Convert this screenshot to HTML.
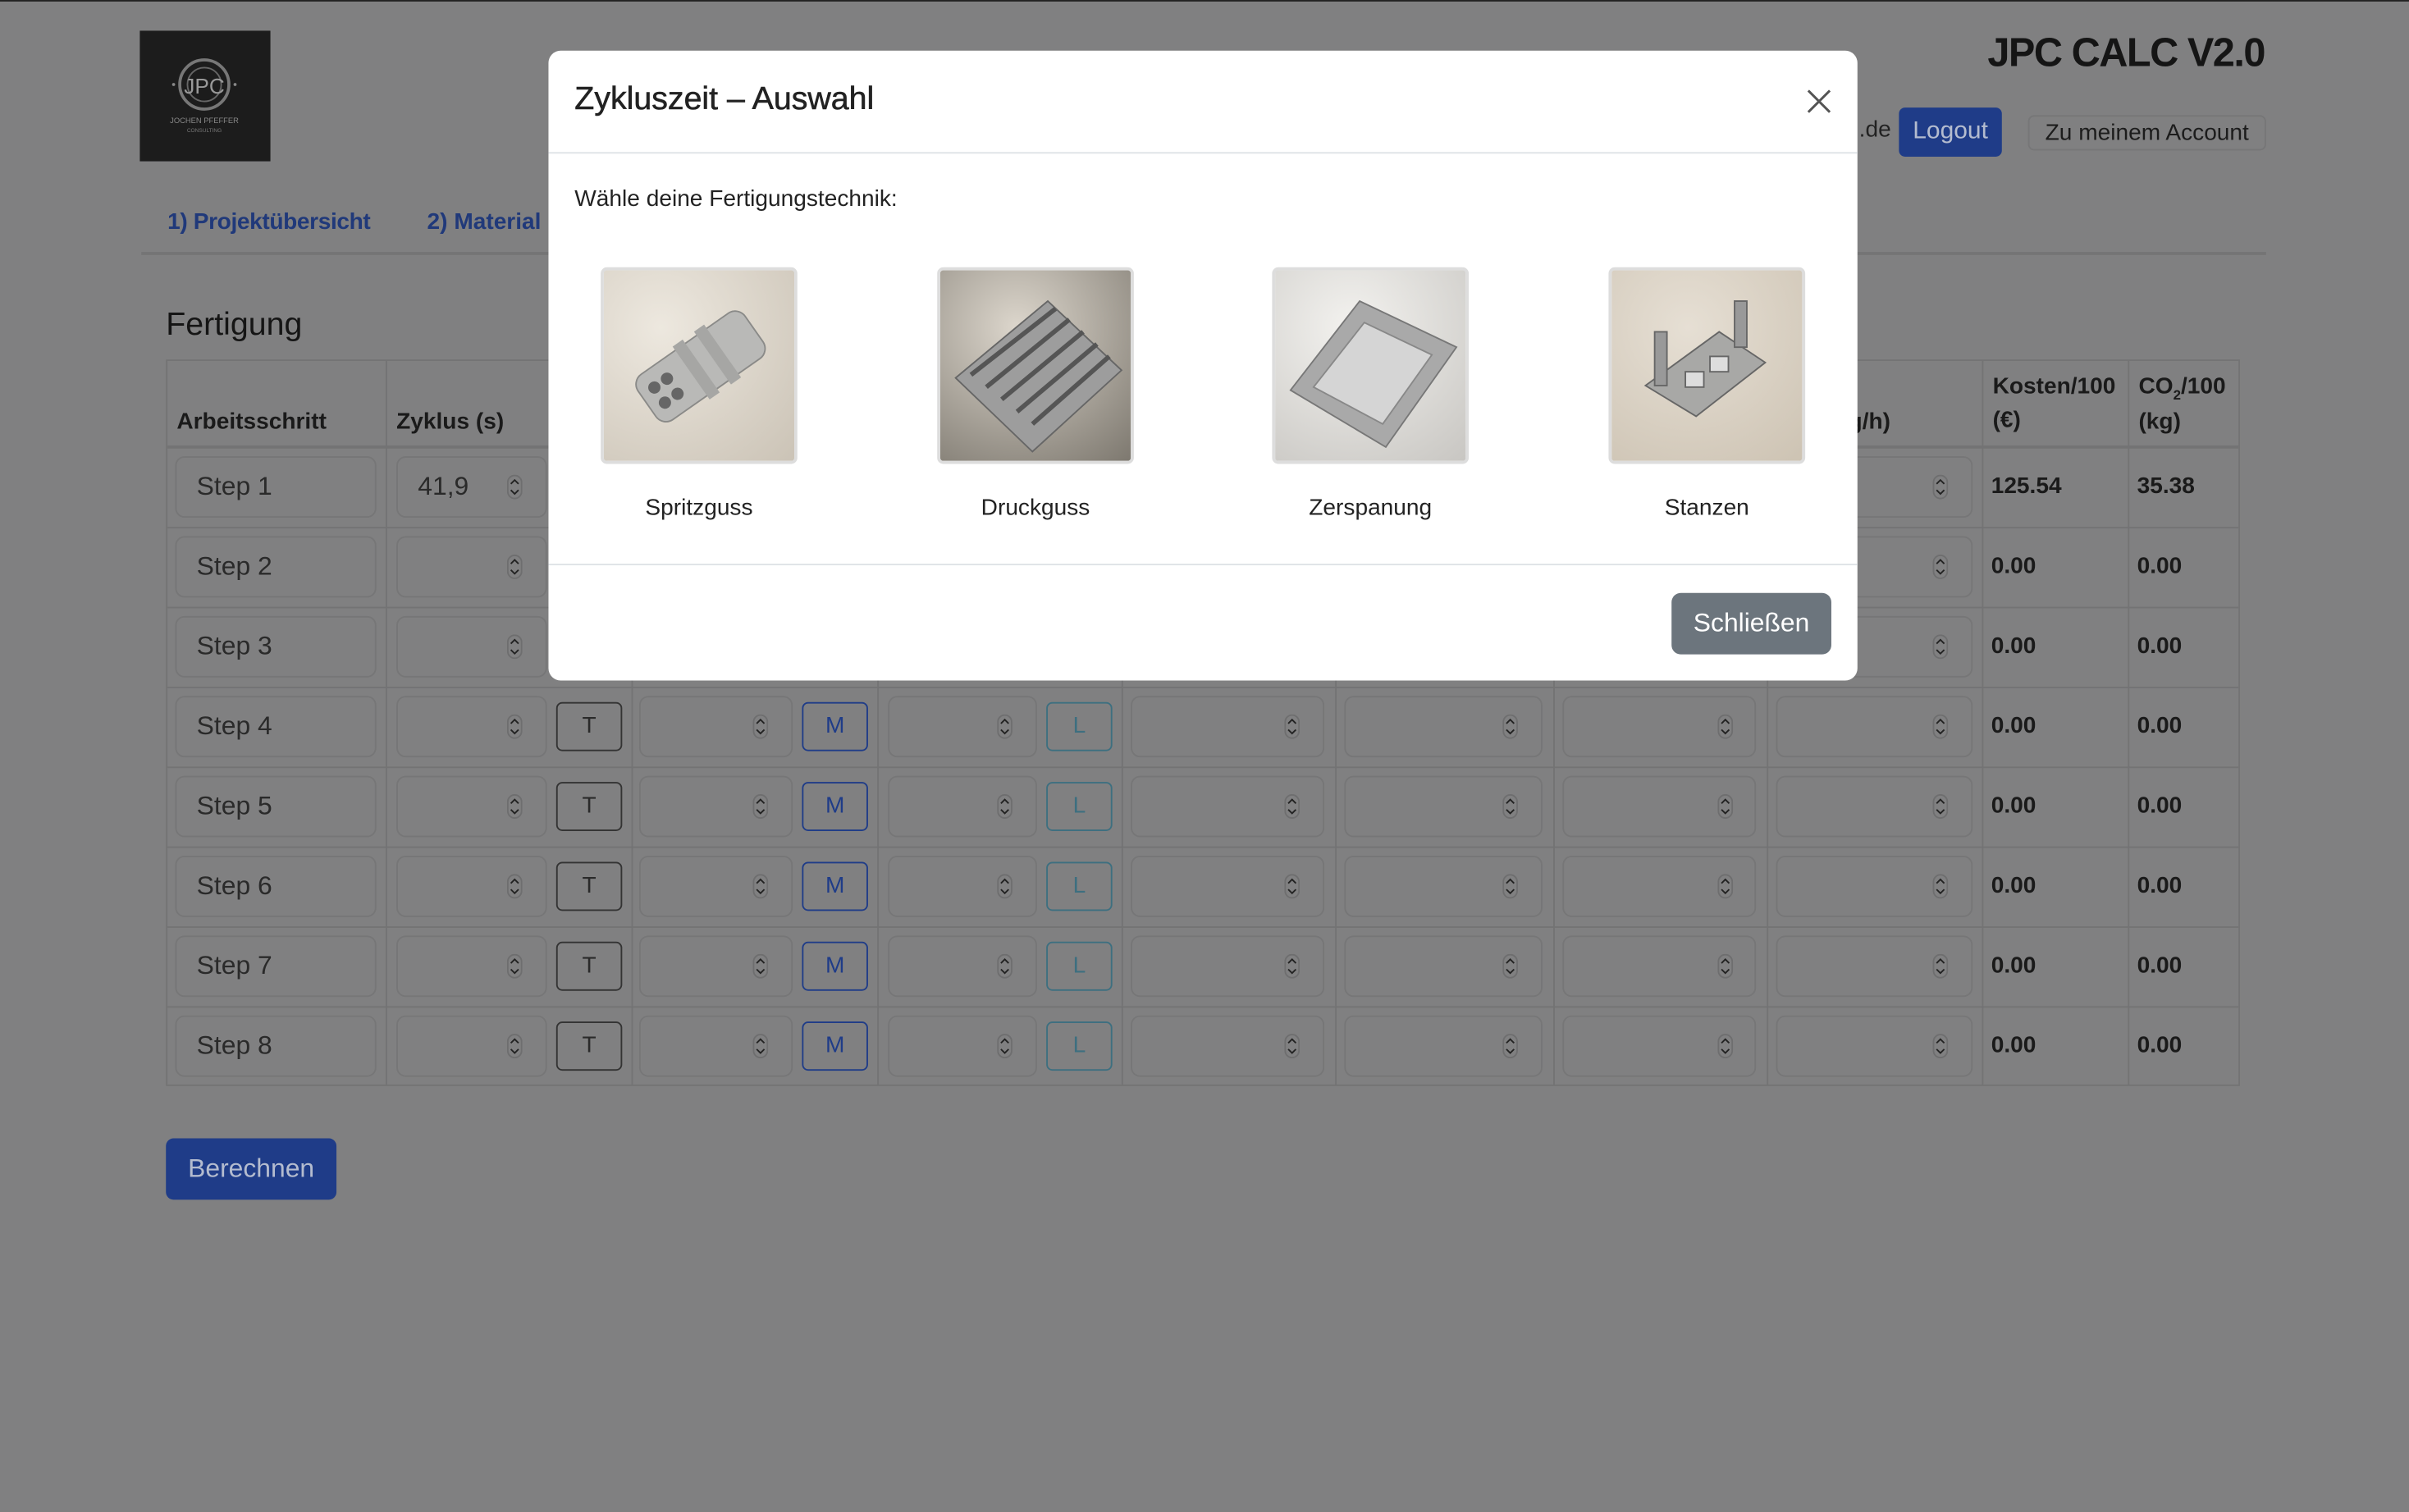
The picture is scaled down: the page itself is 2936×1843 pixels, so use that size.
<!DOCTYPE html>
<html><head><meta charset="utf-8"><style>
*{box-sizing:border-box;margin:0;padding:0}
html,body{width:2936px;height:1842px;overflow:hidden;background:#808081}
#w{position:absolute;left:0;top:0;width:1568px;height:984px;transform:scale(1.87245);transform-origin:0 0;font-family:"Liberation Sans",sans-serif;color:#1a1a1a;background:#808081;border-top:1px solid #222}
.a{position:absolute}
.tb{position:absolute;left:108px;top:233px;width:1350px;height:473px;border:1px solid #737374}
.vl{position:absolute;top:0;bottom:0;width:1px;background:#737374}
.hl{position:absolute;left:0;right:0;height:1px;background:#737374}
.row{position:absolute;left:108px;width:1350px;height:52px}
.in{position:absolute;top:7px;height:40px;border:1px solid #767677;border-radius:6px}
.in span{position:absolute;left:13px;top:9px;font-size:17px;color:#2a2a2a}
.sp{position:absolute;top:19px;width:10px;height:16px}
.bt{position:absolute;top:11px;width:43px;height:32px;border:1.3px solid #333;border-radius:4px;text-align:center;line-height:30px;font-size:15px;color:#2a2a2a}
.num{position:absolute;top:18px;font-size:15px;font-weight:bold;color:#1a1a1a}
.th{position:absolute;font-size:15px;font-weight:bold;line-height:22px}
</style></head><body><div id="w">
<div class="a" style="left:91px;top:19px;width:85px;height:85px;background:#1c1c1c">
<svg width="85" height="85"><circle cx="42" cy="35" r="16" fill="none" stroke="#777" stroke-width="2"/><circle cx="42" cy="35" r="11" fill="none" stroke="#666" stroke-width="1"/><text x="42" y="41" font-size="14" fill="#999" text-anchor="middle" font-family="Liberation Sans">JPC</text><circle cx="22" cy="35" r="1" fill="#888"/><circle cx="62" cy="35" r="1" fill="#888"/><text x="42" y="60" font-size="5" fill="#888" text-anchor="middle" font-family="Liberation Sans">JOCHEN PFEFFER</text><text x="42" y="66" font-size="3.5" fill="#777" text-anchor="middle" font-family="Liberation Sans">CONSULTING</text></svg></div>
<div class="a" style="right:94px;top:18px;font-size:26px;font-weight:bold;color:#151515;letter-spacing:-0.8px">JPC CALC V2.0</div>
<div class="a" style="left:1210px;top:75px;font-size:15px;color:#222">.de</div>
<div class="a" style="left:1236px;top:69px;width:67px;height:32px;background:#1f3c88;border-radius:4px;color:#b4bccf;font-size:16px;text-align:center;line-height:32px">Logout</div>
<div class="a" style="left:1320px;top:74px;width:155px;height:23px;border:1px solid #767677;border-radius:4px;font-size:15px;text-align:center;line-height:21px;color:#1c1c1c">Zu meinem Account</div>
<div class="a" style="left:109px;top:135px;font-size:15px;font-weight:bold;color:#20397a;letter-spacing:-0.2px">1) Projektübersicht</div>
<div class="a" style="left:278px;top:135px;font-size:15px;font-weight:bold;color:#20397a">2) Material</div>
<div class="a" style="left:92px;top:163px;width:1383px;height:2px;background:#747475"></div>
<div class="a" style="left:108px;top:199px;font-size:21px;color:#151515">Fertigung</div>
<div class="tb">
<div class="vl" style="left:142px"></div><div class="vl" style="left:302px"></div><div class="vl" style="left:462px"></div><div class="vl" style="left:621px"></div><div class="vl" style="left:760px"></div><div class="vl" style="left:902px"></div><div class="vl" style="left:1041px"></div><div class="vl" style="left:1181px"></div><div class="vl" style="left:1276px"></div>
<div class="hl" style="top:55px;height:2px"></div><div class="hl" style="top:108px"></div><div class="hl" style="top:160px"></div><div class="hl" style="top:212px"></div><div class="hl" style="top:264px"></div><div class="hl" style="top:316px"></div><div class="hl" style="top:368px"></div><div class="hl" style="top:420px"></div>
<div class="th" style="left:6px;top:29px">Arbeitsschritt</div>
<div class="th" style="left:149px;top:29px">Zyklus (s)</div>
<div class="th" style="left:1094px;top:29px">g/h)</div>
<div class="th" style="left:1188px;top:6px">Kosten/100<br>(€)</div>
<div class="th" style="left:1283px;top:6px">CO<span style="font-size:9px;position:relative;top:4px">2</span>/100<br>(kg)</div>
</div>
<svg width="0" height="0" style="position:absolute"><defs><g id="s"><rect x="0.5" y="0.5" width="9" height="15" rx="4.5" fill="none" stroke="#6e6e6f"/><path d="M2.5 6 L5 3.5 L7.5 6 M2.5 10 L5 12.5 L7.5 10" fill="none" stroke="#222" stroke-width="1"/></g></defs></svg>
<div id="rows"></div>
<div class="a" style="left:108px;top:740px;width:111px;height:40px;background:#1f3c88;border-radius:5px;color:#b4bccf;font-size:17px;text-align:center;line-height:40px">Berechnen</div>
<div class="a" style="left:357px;top:32px;width:852px;height:410px;background:#fff;border-radius:8px">
<div class="a" style="left:17px;top:20px;font-size:21px;color:#222;-webkit-text-stroke:0.3px #222">Zykluszeit – Auswahl</div>
<svg class="a" style="left:818px;top:24px" width="18" height="18"><path d="M2 2L16 16M16 2L2 16" stroke="#555" stroke-width="1.6"/></svg>
<div class="a" style="left:0;top:66px;width:852px;height:1px;background:#dee2e6"></div>
<div class="a" style="left:17px;top:88px;font-size:15px;color:#222">Wähle deine Fertigungstechnik:</div>
<div class="a" style="left:0;top:334px;width:852px;height:1px;background:#dee2e6"></div>
<div class="a" style="left:731px;top:353px;width:104px;height:40px;background:#6c757d;border-radius:6px;color:#fff;font-size:17px;text-align:center;line-height:40px">Schließen</div>
<div class="a" style="left:34px;top:141px;width:128px;height:128px;border:2px solid #ddd;border-radius:4px;background:radial-gradient(circle at 30% 30%,#ede8df,#cbc3b6)">
<svg width="124" height="124"><g transform="rotate(-35 62 62)"><rect x="20" y="45" width="85" height="36" rx="8" fill="#b9b9b7" stroke="#8a8a88"/><rect x="55" y="42" width="8" height="42" fill="#a6a6a4"/><rect x="72" y="42" width="8" height="42" fill="#a6a6a4"/><circle cx="30" cy="57" r="4" fill="#666"/><circle cx="30" cy="69" r="4" fill="#666"/><circle cx="40" cy="57" r="4" fill="#666"/><circle cx="40" cy="69" r="4" fill="#666"/></g></svg></div>
<div class="a" style="left:253px;top:141px;width:128px;height:128px;border:2px solid #ddd;border-radius:4px;background:radial-gradient(circle at 40% 30%,#dcd6cc,#7d786f)">
<svg width="124" height="124"><polygon points="10,70 70,20 118,65 60,118" fill="#9d9d9d" stroke="#666"/><g stroke="#555" stroke-width="3"><path d="M20 68L75 25M30 76L84 32M40 84L93 40M50 92L102 48M60 100L110 56"/></g></svg></div>
<div class="a" style="left:471px;top:141px;width:128px;height:128px;border:2px solid #ddd;border-radius:4px;background:radial-gradient(circle at 40% 30%,#f3f2ef,#c8c6c2)">
<svg width="124" height="124"><polygon points="10,78 55,20 118,50 72,115" fill="#a9a9a9" stroke="#777"/><polygon points="25,76 58,34 102,55 70,100" fill="#d5d5d5" stroke="#888"/></svg></div>
<div class="a" style="left:690px;top:141px;width:128px;height:128px;border:2px solid #ddd;border-radius:4px;background:radial-gradient(circle at 40% 30%,#e6dfd4,#cdc3b3)">
<svg width="124" height="124"><polygon points="22,75 70,40 100,60 55,95" fill="#a8a8a6" stroke="#666"/><rect x="28" y="40" width="8" height="35" fill="#999" stroke="#666"/><rect x="80" y="20" width="8" height="30" fill="#999" stroke="#666"/><rect x="48" y="66" width="12" height="10" fill="#ddd" stroke="#666"/><rect x="64" y="56" width="12" height="10" fill="#ddd" stroke="#666"/></svg></div>
<div class="a" style="left:34px;top:289px;width:128px;text-align:center;font-size:15px;color:#222">Spritzguss</div>
<div class="a" style="left:253px;top:289px;width:128px;text-align:center;font-size:15px;color:#222">Druckguss</div>
<div class="a" style="left:471px;top:289px;width:128px;text-align:center;font-size:15px;color:#222">Zerspanung</div>
<div class="a" style="left:690px;top:289px;width:128px;text-align:center;font-size:15px;color:#222">Stanzen</div>
</div>
</div>
<script>
var h='';
for(var i=0;i<8;i++){
 var t=289+52*i;
 var z=i==0?'<span>41,9</span>':'';
 var sp=function(x){return '<svg class="sp" style="left:'+x+'px" width="10" height="16"><use href="#s"/></svg>';};
 h+='<div class="row" style="top:'+t+'px">'+
 '<div class="in" style="left:6px;width:131px"><span>Step '+(i+1)+'</span></div>'+
 '<div class="in" style="left:150px;width:98px">'+z+'</div>'+sp(222)+
 '<div class="bt" style="left:254px">T</div>'+
 '<div class="in" style="left:308px;width:100px"></div>'+sp(382)+
 '<div class="bt" style="left:414px;border-color:#1f3c88;color:#1f3c88">M</div>'+
 '<div class="in" style="left:470px;width:97px"></div>'+sp(541)+
 '<div class="bt" style="left:573px;border-color:#3d6f80;color:#3d6f80">L</div>'+
 '<div class="in" style="left:628px;width:126px"></div>'+sp(728)+
 '<div class="in" style="left:767px;width:129px"></div>'+sp(870)+
 '<div class="in" style="left:909px;width:126px"></div>'+sp(1010)+
 '<div class="in" style="left:1048px;width:128px">'+(i==0?'<span style="left:-2px">0</span>':'')+'</div>'+sp(1150)+
 '<div class="num" style="left:1188px">'+(i==0?'125.54':'0.00')+'</div>'+
 '<div class="num" style="left:1283px">'+(i==0?'35.38':'0.00')+'</div></div>';
}
document.getElementById('rows').outerHTML=h;
</script>
</body></html>
